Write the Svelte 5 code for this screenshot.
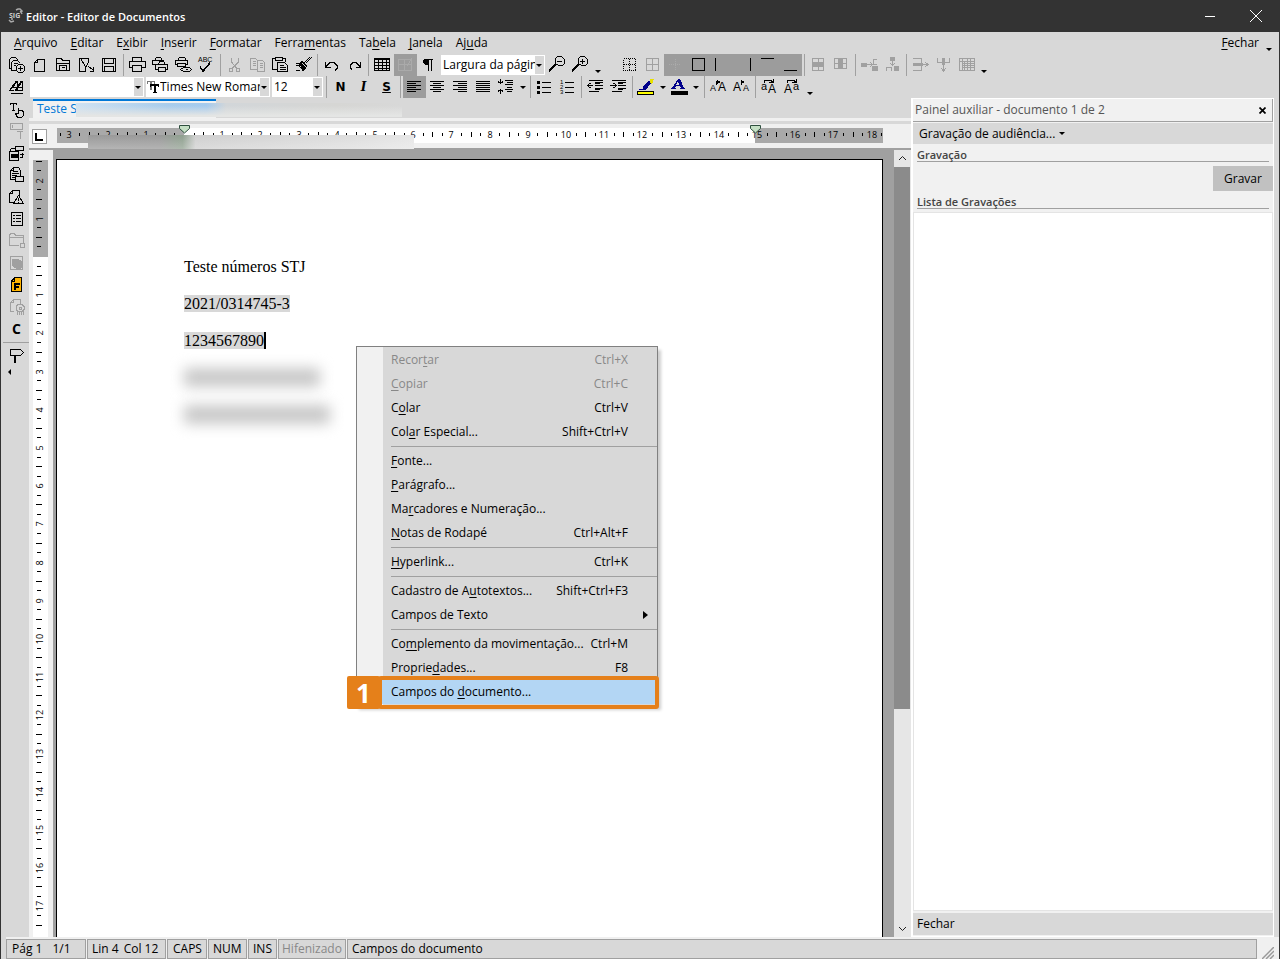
<script>
  // "_" goes before the accelerator letter of a label
  const menus = ['_Arquivo', '_Editar', 'E_xibir', '_Inserir', '_Formatar', 'Ferra_mentas', 'Ta_bela', '_Janela', 'Aj_uda'];

  // d = strokes, f = fill, c = coloured fills, t = small text [x, y, size, text]
  const icons = {
    docs: { d: 'M7 14.5H4.5V5.5l2-2h4l2 2v1M6.5 16.5v-8l2-2h4l3 3M11 16.5H6.5M8.5 9.5h4M8.5 11.5h2M15.5 12v5M13 14.5h5M13.5 10.5h4l2 2v4l-2 2h-4l-2-2v-4z' },
    blank: { d: 'M9.5 5.5h7v12h-10v-9zM9.5 5.5v3h-3' },
    open: { d: 'M5.5 16.5V4.5h5l1 2h7v10zM5.5 9.5h13M8.5 16.5v-5h7v5M10.5 13.5h3' },
    pdf: { d: 'M11 17.5H5.5v-13h9v4M7.5 4.5c0 4 4 6 4 9v4M14.5 8.5l-3 5M14 12.5l5 3M19.5 13v4h-4' },
    save: { d: 'M5.5 4.5h13v13h-13zM7.5 4.5v5h9v-5M7.5 17.5v-5h9v5' },
    print: { d: 'M6.5 7.5v-4h9v4M6 13.5H3.5v-6h16v6H16M6.5 11.5h9v6h-9z' },
    prints: { d: 'M5.5 6.5l2-3h4l2 3M6 10.5H3.5v-4h11M9.5 10.5l1-3h4l2 3M9 15.5H6.5v-5h12v5H16M9.5 13.5h7v4h-7z' },
    preview: { d: 'M5.5 6.5l2-3h5l2 3M5 10.5H3.5v-4h12v4H14M5.5 9.5h8v3h-8zM8.5 15.5l3-2h6l2 2-2 2h-6zM13.5 15.5h2' },
    spell: { d: 'M5 12.5l3 4 7-8M5 13.5l3 4 7-8', t: [[3, 8, 7, 'ABC']] },
    cut: { d: 'M8.5 4v4l5 6M15.5 4v4l-6 6M6.5 14.5h3v3h-3zM13.5 14.5h3v3h-3z' },
    copy: { d: 'M4.5 4.5h5l2 2v9h-7zM6.5 7.5h3M6.5 9.5h3M6.5 11.5h3M11.5 6.5h5l2 2v9h-7zM13.5 9.5h3M13.5 11.5h3M13.5 13.5h3' },
    paste: { d: 'M8 15.5H3.5v-11h3M13.5 4.5h3v3M6.5 3.5h7v3h-7zM8.5 8.5h7l3 3v6h-10zM10.5 11.5h4M10.5 13.5h6M10.5 15.5h6' },
    brush: { d: 'M19.5 3.5l-6 6M17.5 3.5l-6 6M4 9.5h3l5 7M4 11.5h3l4 5M4 16.5h4M7 9.5l6 6M9 7.5l6 5M10 7.5l5 5M8 8.5l6 6' },
    undo: { d: 'M5.5 8v5h5M6 12.5l4-4h4l3 3v3l-2 2' },
    redo: { d: 'M17.5 8v5h-5M17 12.5l-4-4h-3l-3 3v2l2 2' },
    table: { d: 'M3.5 4.5h15v12h-15zM3 5.5h16M3 8.5h16M3 11.5h16M3 14.5h16M7.5 4v13M11.5 4v13M15.5 4v13' },
    tableEdit: { d: 'M4.5 5.5h13v11h-13zM4.5 10.5h13M10.5 5.5v11M18 4l-5 8' },
    pilcrow: { d: 'M8 5.5h8M11.5 5v12M14.5 5v12', f: 'M7 5h5v6H9L6 9V6z' },
    zoomOut: { d: 'M9.5 4.5l2-2h4l3 3v4l-2 2h-4l-3-2zM11 7.5h5M3 16.5l6-6M3 17.5l7-7' },
    zoomIn: { d: 'M9.5 4.5l2-2h4l3 3v4l-2 2h-4l-3-2zM11 7.5h5M13.5 5v5M3 16.5l6-6M3 17.5l7-7' },
    bNone: { d: 'M5.5 4.5h12v12h-12zM5.5 10.5h12M11.5 4.5v12', dash: true },
    bAll: { d: 'M5.5 4.5h12v12h-12zM5.5 10.5h12M11.5 4.5v12' },
    bInner: { d: 'M5 10.5h12M11.5 4.5v12', dash: true },
    bBox: { d: 'M5.500 4.500h12v12h-12z' },
    bLeft: { d: 'M5.5 4v13' },
    bRight: { d: 'M17.5 4v13' },
    bTop: { d: 'M5 4.5h13' },
    bBottom: { d: 'M5 16.5h13' },
    mergeRow: { d: 'M5.5 4.5h11v12h-11zM11.5 4.5v12', f: 'M5 8h12v5H5z' },
    mergeCol: { d: 'M4.5 4.5h12v10h-12zM4 9.5h13', f: 'M8 5h5v10H8z' },
    insRow: { d: 'M4 10.5h10M12 8l2 2.5-2 2.5M19 5.5h-4v4M15 10.5h4', f: 'M3 9h6v4H3zM14 12h6v5h-6z' },
    insCol: { d: 'M11.5 3v8M9 9l2.5 2L14 9M5.5 17v-4h5v4', f: 'M9 3h5v4H9zM13 12h5v5h-5z' },
    splitRow: { d: 'M4 4.5h8v12H4M4 10.5h15M16 8l3 2.5-3 2.5', f: 'M4 9h10v3H4z' },
    splitCol: { d: 'M5.5 4v4h12V4M11.5 5v12M9 14l2.5 3 2.5-3', f: 'M10 4h3v7h-3z' },
    grid: { d: 'M4.5 4.5h15v12h-15zM4 7.5h15M7.5 4v13M8 9.5h12M8 11.5h12M8 13.5h12M9.5 7v9M12.5 5v12M15.5 5v12' },
    styles: { d: 'M4 14.5h5M12 14.5h6M6 17.5h12M5 13.5l6-8h1v9M8 11.5h4M10 14.5l6-9h1v9M12 11.5h5M5 14.5l7-9M17.5 5v9M11 14.5l6-9' },
    left: { d: 'M4 5.5h14M4 7.5h9M4 9.5h14M4 11.5h9M4 13.5h14M4 15.5h9' },
    center: { d: 'M4 5.5h14M7 7.5h8M4 9.5h14M7 11.5h8M4 13.5h14M7 15.5h8' },
    right: { d: 'M4 5.5h14M9 7.5h9M4 9.5h14M9 11.5h9M4 13.5h14M9 15.5h9' },
    justify: { d: 'M4 5.5h14M4 7.5h14M4 9.5h14M4 11.5h14M4 13.5h14M4 15.5h14' },
    spacing: { d: 'M5.5 3v5M3 5.5l2.5 2 2.5-2M5.5 18v-5M3 15.5l2.5-2 2.5 2M10 4.5h8M12 6.5h6M10 8.5h8M12 11.5h5M10 13.5h8M12 15.5h5' },
    bullets: { d: 'M9 6.5h9M9 11.5h9M9 16.5h9', f: 'M4 5h3v3H4zM4 10h3v3H4zM4 15h3v3H4z' },
    numbers: { d: 'M9 6.5h9M9 11.5h9M9 16.5h9', t: [[4, 8, 6, '1'], [4, 13, 6, '2'], [4, 18, 6, '3']] },
    outdent: { d: 'M5 4.5h14M11 6.5h8M11 7.5h5M11 9.5h8M11 12.5h8M11 13.5h5M5 15.5h10M3 9.5h6M6.5 7l-3 2.5 3 2.5' },
    indent: { d: 'M5 4.5h14M11 6.5h8M11 7.5h5M11 9.5h8M11 12.5h8M11 13.5h5M5 15.5h10M3 9.5h6M6.5 7l3 2.5-3 2.5' },
    marker: { c: [['#00008b', 'M8 10l6-5 2 2-5 7H4v-1h4z'], ['#e8e000', 'M15 3h4l-2 5-2-1z'], ['#000', 'M2 15h17v4H2z'], ['#ff0', 'M3 16h15v2H3z']] },
    color: { c: [['#00008b', 'M10 3h2l4 9h1v1h-5v-1h1l-1-2H8l-1 2h1v1H3v-1h1zM8 9h3l-1-4z'], ['#000', 'M3 15h17v4H3z']] },
    grow: { t: [[3, 15, 9, 'A'], [11, 15, 12, 'A']], d: 'M9.5 5v4', f: 'M10 4l4 2-4 2z' },
    shrink: { t: [[3, 15, 12, 'A'], [13, 15, 9, 'A']], d: 'M11.5 5v4', f: 'M11 4l4 2-4 2z' },
    caseUp: { t: [[3, 14, 11, 'a'], [10, 17, 12, 'A']], d: 'M6.5 7V5l2-1h4l2 2M11 6.5h4V3' },
    caseDown: { t: [[3, 17, 12, 'A'], [12, 14, 11, 'a']], d: 'M6.5 7V5l2-1h4l2 2M11 6.5h4V3' },
    hand: { d: 'M5 5.5h7M5.5 5v2M11.5 5v2M8.5 5v7M7 12.500h3M13.5 16V9.5M13.5 12.500h4l1 2v3l-2 2h-4l-2-4h3' },
    textBox: { d: 'M5.5 3.5h12v6h-12zM7.5 5v3M12 11.5h6M15.5 11v8' },
    fields: { d: 'M4.5 9.5h9v9h-9zM4.5 9.5l2-3h4M10.5 4.5h8v4h-8zM15 12.5h4M17.5 11v4M15 15.5h3', f: 'M6 12h7v4H6z' },
    docCard: { d: 'M10 15.5H5.5v-9l3-3h5l2 3v5M8.5 3v3h-3M8 7.5h5M7 9.5h7M7 11.5h5M7 13.5h3M10.5 12.5h8v5h-8z' },
    docWarn: { d: 'M9 16.5H4.5v-9l3-3h7v5M7.5 4v3h-3M13.5 9.5l-5 8h10zM13.5 12v3M13.5 16v1' },
    list: { d: 'M6.5 4.5h11v13h-11zM8 7.5h2M8 10.5h2M8 13.5h2M11 7.5h5M11 10.5h5M11 13.5h5' },
    folder: { d: 'M14 15.5H4.5V5.5l1-2h4l1 2h8v7M5 7.5h14M15.5 13.5h4v4h-4z' },
    docGray: { d: 'M5.5 4.5h12v13h-12z', f: 'M7 7h5l3 1 3 3v4l-3 2h-3l-5-3z' },
    form: { c: [['#000', 'M9 3h8v15H6V6z'], ['#ffb400', 'M10 4h6v13H7V8h3zM9 5v2H7z'], ['#000', 'M9 9h6v2h-4v1h3v2h-3v2H9z']] },
    seal: { d: 'M9 15.5H5.5v-9l3-3h7v4M8.5 3v3h-3M13 8.5h4l2 2v3l-2 2h-4l-2-2v-3zM14.5 11v2h2v-2zM12.5 15v4M14.5 16v3M16.5 16v3M18.5 15v4' },
    sign: { d: 'M5.5 4.5h10l3 3-3 3h-10zM9.5 10v8M10.5 10v8' }
  };

  const i = (n, rest = {}) => ({ n, ...rest });
  const sep = { sep: true };
  const off = { off: true };
  const on = { on: true };

  const rowOne = [
    i('docs'), i('blank'), i('open'), i('pdf'), i('save'), { sep: true, wide: true },
    i('print'), i('prints'), i('preview'), i('spell'), sep,
    i('cut', off), i('copy', off), i('paste'), i('brush'), sep,
    i('undo'), i('redo'), sep,
    i('table'), i('tableEdit', { on: true, off: true }), i('pilcrow'), { zoom: true },
    i('zoomOut'), i('zoomIn'), { more: true }, { gap: true },
    i('bNone'), i('bAll', off), i('bInner', { on: true, off: true }), i('bBox', on), i('bLeft', on), i('bRight', on), i('bTop', on), i('bBottom', on), sep,
    i('mergeRow', off), i('mergeCol', off), sep,
    i('insRow', off), i('insCol', off), sep,
    i('splitRow', off), i('splitCol', off), i('grid', off), { more: true }
  ];

  const rowTwo = [
    sep, { letter: 'N', cls: 'bold' }, { letter: 'I', cls: 'ital' }, { letter: 'S', cls: 'under' }, sep,
    i('left', on), i('center'), i('right'), i('justify'), i('spacing'), { drop: true }, sep,
    i('bullets'), i('numbers'), sep,
    i('outdent'), i('indent'), sep,
    i('marker'), { drop: true }, i('color'), { drop: true }, { sep: true, wide: true },
    i('grow'), i('shrink'), sep,
    i('caseUp'), i('caseDown'), { more: true }
  ];

  const side = [
    i('hand'), i('textBox', off), i('fields'), i('docCard'), i('docWarn'), i('list'),
    i('folder', off), i('docGray', off), i('form'), i('seal', off)
  ];

  const context = [
    { label: 'Recor_tar', key: 'Ctrl+X', off: true },
    { label: '_Copiar', key: 'Ctrl+C', off: true },
    { label: 'C_olar', key: 'Ctrl+V' },
    { label: 'Col_ar Especial...', key: 'Shift+Ctrl+V' },
    null,
    { label: '_Fonte...' },
    { label: '_Parágrafo...' },
    { label: 'Ma_rcadores e Numeração...' },
    { label: '_Notas de Rodapé', key: 'Ctrl+Alt+F' },
    null,
    { label: '_Hyperlink...', key: 'Ctrl+K' },
    null,
    { label: 'Cadastro de A_utotextos...', key: 'Shift+Ctrl+F3' },
    { label: 'Campos de Texto', sub: true },
    null,
    { label: 'Co_mplemento da movimentação...', key: 'Ctrl+M' },
    { label: 'Proprie_dades...', key: 'F8' },
    { label: 'Campos do _documento...', active: true }
  ];

  // ruler marks, one every quarter of a centimetre
  const CM = 38.2;
  function marks(from, to, zero) {
    const list = [];
    for (let q = Math.ceil(from * 4); q <= to * 4; q++) {
      if (q === 0) continue;
      list.push({
        pos: Math.round(zero + (q / 4) * CM),
        num: q % 4 === 0 ? Math.abs(q / 4) : null,
        half: q % 2 === 0
      });
    }
    return list;
  }
  const across = marks(-3.25, 18.25, 127);

  let rulerHeight = $state(780);
  let down = $derived(marks(-2.5, (rulerHeight - 112) / CM, 96));

  let zoom = $state('Largura da página');
  let font = $state('Times New Roman');
  let size = $state('12');
</script>

{#snippet accel(label)}
  {@const at = label.indexOf('_')}
  {#if at < 0}{label}{:else}{label.slice(0, at)}<u>{label[at + 1]}</u>{label.slice(at + 2)}{/if}
{/snippet}

{#snippet icon(name)}
  {@const ic = icons[name]}
  <svg class="icon" width="23" height="22" viewBox="0 0 23 22" aria-hidden="true">
    {#if ic.f}<path d={ic.f} fill="currentColor" />{/if}
    {#each ic.c ?? [] as [color, d]}<path {d} fill={color} />{/each}
    {#if ic.d}<path d={ic.d} fill="none" stroke="currentColor" stroke-dasharray={ic.dash ? '1 1' : null} />{/if}
    {#each ic.t ?? [] as [x, y, s, text]}<text {x} {y} font-size={s}>{text}</text>{/each}
  </svg>
{/snippet}

{#snippet tool(item)}
  {#if item.sep}
    <span class="sep" class:wide={item.wide}></span>
  {:else if item.gap}
    <span class="gap"></span>
  {:else if item.more}
    <button class="more" aria-label="Mais botões"></button>
  {:else if item.drop}
    <button class="drop" aria-label="Opções"></button>
  {:else if item.zoom}
    <label class="combo zoom">
      <select aria-label="Zoom" bind:value={zoom}><option>Largura da página</option></select>
    </label>
  {:else if item.letter}
    <button class="tool letter {item.cls}">{item.letter}</button>
  {:else}
    <button class="tool" class:on={item.on} class:off={item.off} disabled={item.off} aria-label={item.n}>
      {@render icon(item.n)}
    </button>
  {/if}
{/snippet}

<div class="window">
  <header class="title">
    <svg width="17" height="16" viewBox="0 0 17 16" aria-hidden="true">
      <text x="1" y="10" font-size="7" font-weight="700" fill="#ccc">SIG</text>
      <path d="M8 2l2-1h2l2 2-2 1M13 4l1 2M1 12l2 2 3-1M3 11h2" fill="none" stroke="#aaa" stroke-width="1.5" />
    </svg>
    <h1>Editor - Editor de Documentos</h1>
    <button aria-label="Minimizar">
      <svg width="12" height="12" viewBox="0 0 12 12"><path d="M1 6.5h10" stroke="#fff" /></svg>
    </button>
    <button aria-label="Fechar janela">
      <svg width="12" height="12" viewBox="0 0 12 12"><path d="M0 0l12 12M12 0L0 12" stroke="#fff" /></svg>
    </button>
  </header>

  <div class="frame">
    <nav class="menubar">
      {#each menus as m}<button>{@render accel(m)}</button>{/each}
      <button class="close">{@render accel('_Fechar')}</button>
      <button class="more" aria-label="Mais botões"></button>
    </nav>

    <div class="bar">
      {#each rowOne as item}{@render tool(item)}{/each}
    </div>

    <div class="bar">
      <button class="tool" aria-label="Estilos">{@render icon('styles')}</button>
      <label class="combo style"><select aria-label="Estilo"><option></option></select></label>
      <label class="combo font">
        <svg width="12" height="14" viewBox="0 0 12 14" aria-hidden="true">
          <path d="M0 1h8v3H7V2H5v8H3V2H1v2H0z" fill="#777" />
          <path d="M3 4h9v3h-1V6H9v6h1v1H6v-1h1V6H4v1H3z" fill="#000" />
        </svg>
        <select aria-label="Fonte" bind:value={font}><option>Times New Roman</option></select>
      </label>
      <label class="combo size"><select aria-label="Tamanho" bind:value={size}><option>12</option></select></label>
      {#each rowTwo as item}{@render tool(item)}{/each}
    </div>

    <div class="body">
      <aside class="side">
        {#each side as item}{@render tool(item)}{/each}
        <button class="tool c">C</button>
        <span class="line"></span>
        {@render tool(i('sign'))}
        <span class="back"></span>
      </aside>

      <main class="editor">
        <div class="tabs">
          <button class="tab">Teste S</button>
          <span class="smudge tab-smudge"></span>
        </div>

        <div class="ruler">
          <button class="tabstop" aria-label="Tabulação">
            <svg width="13" height="13" viewBox="0 0 13 13"><path d="M3 3v7h7" fill="none" stroke="#000" stroke-width="2" /></svg>
          </button>
          <svg class="across" width="826" height="24" viewBox="0 0 826 24">
            <path d="M0 4h826v15H0z" fill="#a9a9a9" />
            <path d="M127 4h571v15H127z" fill="#fff" />
            {#each across as m}
              {#if m.num}
                <text x={m.pos} y="14" text-anchor="middle">{m.num}</text>
              {:else}
                <path d="M{m.pos} {m.half ? 8 : 9}h1v{m.half ? 5 : 3}h-1z" />
              {/if}
            {/each}
            <path d="M122.500 1.500h10v3l-5 4.500-5-4.500zM693.500 1.500h10v3l-5 4.500-5-4.500z" fill="#c5e0c5" stroke="#2f4f3f" />
          </svg>
          <span class="smudge ruler-smudge"></span>
        </div>

        <div class="work">
          <div class="vruler" bind:clientHeight={rulerHeight}>
            <svg width="15" height={rulerHeight} aria-hidden="true">
              <rect width="15" height="100%" fill="#fff" />
              <path d="M0 0h15v97H0z" fill="#a9a9a9" />
              {#each down as m}
                {#if m.num}
                  <text transform="translate(10 {m.pos + 1}) rotate(-90)" text-anchor="middle">{m.num}</text>
                {:else}
                  <path d="M{m.half ? 3 : 4} {m.pos}v1h{m.half ? 6 : 4}v-1z" />
                {/if}
              {/each}
            </svg>
          </div>
          <div class="canvas">
            <article class="page">
              <p>Teste números STJ</p>
              <p><mark>2021/0314745-3</mark></p>
              <p><mark class="caret">1234567890</mark></p>
              <p class="hidden-line"></p>
              <p class="hidden-line long"></p>
            </article>
          </div>
          <div class="scroll">
            <svg width="17" height="17" viewBox="0 0 17 17"><path d="M5 10l3.500-3.500L12 10" fill="none" stroke="#222" /></svg>
            <span class="track"><span class="thumb"></span></span>
            <svg width="17" height="17" viewBox="0 0 17 17"><path d="M5 7l3.500 3.500L12 7" fill="none" stroke="#222" /></svg>
          </div>
        </div>
      </main>

      <section class="panel">
        <header>
          <h2>Painel auxiliar - documento 1 de 2</h2>
          <button aria-label="Fechar painel">
            <svg width="7" height="7" viewBox="0 0 7 7"><path d="M.5 .5l6 6M6.500 .5l-6 6" stroke="#000" stroke-width="1.700" /></svg>
          </button>
        </header>
        <button class="mode">Gravação de audiência...<span class="arrow"></span></button>
        <h3>Gravação</h3>
        <button class="record">Gravar</button>
        <h3>Lista de Gravações</h3>
        <div class="list"></div>
        <button class="foot">Fechar</button>
      </section>
    </div>

    <footer class="status">
      <span class="pg"><span>Pág 1</span><span>1/1</span></span>
      <span class="lc"><span>Lin 4</span><span>Col 12</span></span>
      <span class="caps">CAPS</span>
      <span class="num">NUM</span>
      <span class="ins">INS</span>
      <span class="hif">Hifenizado</span>
      <span class="msg">Campos do documento</span>
      <svg width="12" height="12" viewBox="0 0 12 12" aria-hidden="true"><path d="M0 12L12 0M4 12l8-8M8 12l4-4" stroke="#999" stroke-width="1.500" /></svg>
    </footer>
  </div>

  <div class="context" role="menu">
    {#each context as item}
      {#if item}
        <button role="menuitem" class:active={item.active} disabled={item.off}>
          <span>{@render accel(item.label)}</span>
          {#if item.key}<kbd>{item.key}</kbd>{/if}
          {#if item.sub}<span class="sub"></span>{/if}
        </button>
      {:else}
        <hr />
      {/if}
    {/each}
    <div class="callout"><b>1</b></div>
  </div>
</div>

<style>
  :global(body) {
    background: #d8d8d8;
  }

  .window, button, select, kbd {
    font: 12px/16px "Open Sans", "Noto Sans", sans-serif;
    color: #000;
  }

  .window {
    position: relative;
    display: flex;
    flex-direction: column;
    height: 100vh;
    overflow: hidden;
  }

  button {
    padding: 0;
    border: 0;
    background: none;
    white-space: nowrap;
  }

  svg {
    display: block;
    flex: none;
  }

  h1, h2, h3, p {
    margin: 0;
  }

  u {
    text-underline-offset: 2px;
  }

  .title {
    display: flex;
    align-items: center;
    flex: none;
    height: 32px;
    padding: 0 1px 0 8px;
    background: #333;
  }

  .title h1 {
    flex: 1;
    margin-left: 1px;
    padding-top: 2px;
    font-size: 11px;
    line-height: 16px;
    font-weight: 600;
    color: #fff;
  }

  .title button {
    display: grid;
    place-items: center;
    width: 46px;
    height: 32px;
  }

  .frame {
    display: flex;
    flex-direction: column;
    flex: 1;
    min-height: 0;
    border: solid #333;
    border-width: 0 1px;
    background: #d8d8d8;
  }

  .menubar {
    display: flex;
    align-items: center;
    flex: none;
    gap: 13px;
    height: 22px;
    padding: 0 4px 0 13px;
  }

  .menubar .close {
    margin-left: auto;
    margin-right: -9px;
  }

  .bar {
    display: flex;
    align-items: center;
    flex: none;
    height: 22px;
    padding-left: 4px;
  }

  .tool {
    flex: none;
    width: 23px;
    height: 22px;
    color: #000;
  }

  .icon {
    shape-rendering: crispEdges;
  }

  .icon text {
    font-family: "Liberation Sans", sans-serif;
  }

  .off {
    color: #a0a0a0;
  }

  .on {
    background: #9c9c9c;
  }

  .on.off {
    color: #aaa;
  }

  .letter {
    font: 700 12px/22px "DejaVu Sans", sans-serif;
  }

  .ital {
    font-style: italic;
    font-family: "DejaVu Serif", serif;
  }

  .under {
    text-decoration: underline;
  }

  .sep {
    flex: none;
    width: 1px;
    height: 22px;
    margin: 0 2px;
    background: #a0a0a0;
  }

  .sep.wide {
    margin: 0 2px 0 3px;
  }

  .gap {
    width: 14px;
  }

  .more, .drop {
    flex: none;
    width: 12px;
    height: 22px;
  }

  .drop {
    width: 10px;
  }

  .more::before, .drop::before, .combo::after, .arrow {
    content: "";
    display: block;
    width: 0;
    height: 0;
    margin: 0 auto;
    border: 3px solid transparent;
    border-top-color: #000;
    border-bottom: 0;
  }

  .more::before {
    margin-top: 12px;
  }

  .combo {
    position: relative;
    display: flex;
    align-items: center;
    flex: none;
    box-sizing: border-box;
    height: 20px;
    margin: 0 1px;
    border: 1px solid #fff;
    background: linear-gradient(#d8d8d8, #d8d8d8) right / 9px 100% no-repeat #fff;
  }

  .combo::after {
    position: absolute;
    right: 2px;
    top: 8px;
  }

  .combo select {
    flex: 1;
    min-width: 0;
    height: 18px;
    margin-right: 9px;
    padding: 0 0 0 1px;
    border: 0;
    appearance: none;
    background: none;
    overflow: hidden;
    text-overflow: clip;
  }

  .style {
    width: 114px;
    margin-left: 2px;
  }

  .font {
    width: 124px;
  }

  .size {
    width: 51px;
  }

  .zoom {
    width: 104px;
  }

  .body {
    display: flex;
    flex: 1;
    min-height: 0;
  }

  .side {
    display: flex;
    flex-direction: column;
    flex: none;
    width: 24px;
    padding-left: 4px;
  }

  .c {
    font-weight: 700;
    font-size: 14px;
  }

  .line {
    height: 1px;
    margin: 2px 0 2px -2px;
    background: #a0a0a0;
  }

  .back {
    margin: 2px 0 0 3px;
    width: 0;
    border: 3px solid transparent;
    border-right-color: #000;
    border-left: 0;
  }

  .editor {
    display: flex;
    flex-direction: column;
    flex: 1;
    min-width: 0;
  }

  .tabs {
    position: relative;
    flex: none;
    height: 19px;
    padding: 1px 0 0 4px;
    border-bottom: 3px solid #f0f0f0;
  }

  .tab {
    display: block;
    width: 183px;
    height: 19px;
    padding: 0 0 2px 4px;
    border-top: 2px solid #0078d7;
    background: #f1f1f1;
    color: #0078d7;
    text-align: left;
    line-height: 14px;
  }

  .smudge {
    position: absolute;
  }

  .tab-smudge {
    left: 47px;
    top: 5px;
    width: 326px;
    height: 14px;
    background: linear-gradient(#f1f1f100 20%, #e4e5e4 90%), linear-gradient(90deg, #cfe2f2, #a9cdec 28%, #a5cbee 40%, #d2d6d9 46%, #d6d6d4 80%, #d8d8d8);
  }

  .ruler {
    position: relative;
    display: flex;
    align-items: center;
    flex: none;
    height: 24px;
    margin-top: 3px;
    padding-left: 3px;
    border-bottom: 2px solid #a0a0a0;
    background: #f0f0f0;
  }

  .tabstop {
    flex: none;
    width: 15px;
    height: 15px;
    border: 1px solid #a0a0a0;
    background: #fff;
    box-sizing: border-box;
  }

  .across {
    margin-left: 10px;
  }

  .across text, .vruler text {
    font-size: 9px;
  }

  .ruler-smudge {
    left: 59px;
    top: 11px;
    width: 326px;
    height: 14px;
    background: linear-gradient(#fff0, #fff4), linear-gradient(90deg, #9a9a9a, #999 22%, #8fa08f 29%, #cfcfcf 33%, #ddd 80%, #e6e6e6);
  }

  .work {
    display: flex;
    flex: 1;
    min-height: 0;
    background: #a0a0a0;
  }

  .vruler {
    flex: none;
    width: 24px;
    box-sizing: border-box;
    padding: 10px 0 0 4px;
    overflow: hidden;
    background: #f0f0f0;
  }

  .canvas {
    flex: 1;
    min-width: 0;
    overflow: hidden;
    padding: 9px 11px 0 3px;
  }

  .page {
    box-sizing: border-box;
    height: 100%;
    padding: 97px 127px 0;
    border: 1px solid #000;
    border-bottom: 0;
    background: #fff;
    font: 16px/19px "Liberation Serif", serif;
  }

  .page p {
    margin-bottom: 18px;
  }

  mark {
    background: #d8d8d8;
    color: #000;
  }

  .caret {
    border-right: 2px solid #000;
  }

  .page .hidden-line {
    width: 136px;
    height: 19px;
    background: #c8c8c8;
    filter: blur(7px);
  }

  .page .long {
    width: 146px;
  }

  .scroll {
    display: flex;
    flex-direction: column;
    flex: none;
    width: 17px;
    background: #e6e6e6;
  }

  .track {
    flex: 1;
  }

  .thumb {
    display: block;
    height: 72%;
    background: #8b8b8b;
    margin: 0 1px 0 0;
  }

  .panel {
    display: flex;
    flex-direction: column;
    flex: none;
    width: 360px;
    margin-right: 5px;
    border: 1px solid #fff;
    border-left-width: 2px;
    background: #f1f1f1;
  }

  .panel header {
    display: flex;
    align-items: center;
    justify-content: space-between;
    height: 22px;
    padding: 0 6px 0 2px;
    border: solid #a0a0a0;
    border-width: 0 1px 1px 0;
  }

  .panel h2 {
    font: inherit;
    color: #555;
  }

  .mode {
    display: flex;
    align-items: center;
    gap: 4px;
    height: 21px;
    margin-top: 1px;
    padding-left: 6px;
    background: #d8d8d8;
  }

  .arrow {
    margin: 0;
  }

  .panel h3 {
    height: 14px;
    margin: 3px 4px 0;
    border-bottom: 1px solid #a0a0a0;
    font-size: 11px;
    line-height: 16px;
    font-weight: 600;
    color: #444;
  }

  .record {
    align-self: flex-end;
    width: 60px;
    height: 25px;
    margin-top: 4px;
    background: #c1c1c1;
  }

  .list {
    flex: 1;
    margin-top: 3px;
    border: 1px solid #e4e4e4;
    background: #fff;
  }

  .foot {
    height: 22px;
    margin: 2px 0 1px;
    padding-left: 4px;
    background: #d8d8d8;
    text-align: left;
  }

  .status {
    display: flex;
    flex: none;
    gap: 1px;
    height: 20px;
    margin-left: 5px;
    padding: 2px 5px 0 0;
    background: #f0f0f0;
  }

  .status > span {
    display: flex;
    flex: none;
    gap: 10px;
    box-sizing: border-box;
    padding: 0 5px;
    border: 1px solid #a0a0a0;
    background: #d8d8d8;
    line-height: 18px;
    white-space: nowrap;
  }

  .status .pg {
    width: 80px;
  }

  .status .lc {
    gap: 5px;
    width: 79px;
    padding: 0 4px;
  }

  .status .caps {
    width: 40px;
  }

  .status .num {
    width: 39px;
    padding: 0 4px;
  }

  .status .ins {
    width: 29px;
    padding: 0 4px;
  }

  .status .hif {
    width: 68px;
    padding: 0 3px;
    color: #888;
  }

  .status .msg {
    flex: 1;
    margin-right: 4px;
    padding: 0 4px;
  }

  .status svg {
    align-self: flex-end;
  }

  .context {
    position: absolute;
    left: 356px;
    top: 346px;
    box-sizing: border-box;
    width: 302px;
    padding: 1px 0;
    border: 1px solid #808080;
    background: linear-gradient(90deg, #f1f1f1 26px, #d8d8d8 26px);
    box-shadow: 3px 4px 3px #0003;
  }

  .context button {
    display: flex;
    align-items: center;
    justify-content: space-between;
    width: 100%;
    height: 24px;
    padding: 0 29px 0 34px;
  }

  .context button:disabled, .context button:disabled kbd {
    color: #888;
  }

  .context .active {
    background: linear-gradient(90deg, #f1f1f1 24px, #b3d6f4 24px);
  }

  .context hr {
    height: 1px;
    margin: 2px 0 2px 34px;
    border: 0;
    background: #a0a0a0;
  }

  .sub {
    margin-right: -20px;
    border: 4px solid transparent;
    border-left: 5px solid #000;
    border-right: 0;
  }

  .callout {
    position: absolute;
    left: 21px;
    right: -2px;
    bottom: -4px;
    box-sizing: border-box;
    height: 33px;
    border: 4px solid #e5801a;
    border-radius: 3px;
    pointer-events: none;
  }

  .callout b {
    position: absolute;
    left: -35px;
    top: -4px;
    width: 33px;
    height: 33px;
    border-radius: 2px;
    background: #e5801a;
    color: #fff;
    font-size: 26px;
    line-height: 34px;
    text-align: center;
  }
</style>
